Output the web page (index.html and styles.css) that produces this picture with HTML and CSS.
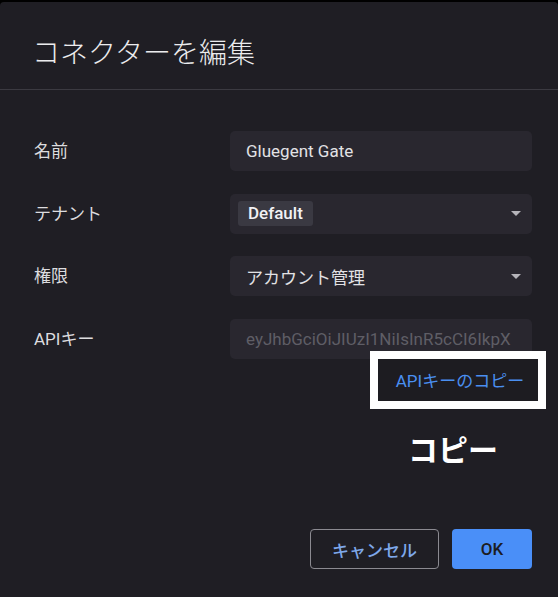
FILE: index.html
```html
<!DOCTYPE html>
<html lang="ja">
<head>
<meta charset="utf-8">
<title>コネクターを編集</title>
<link rel="stylesheet" href="styles.css">
</head>
<body>
<div class="dialog">
  <div class="dialog-header">
    <h1 class="dialog-title">コネクターを編集</h1>
  </div>
  <div class="dialog-body">
    <div class="form-grid">
      <div class="label">名前</div>
      <div class="field"><span class="field-text">Gluegent Gate</span></div>

      <div class="label">テナント</div>
      <div class="field field-select chip-field">
        <span class="chip">Default</span>
        <span class="caret"></span>
      </div>

      <div class="label">権限</div>
      <div class="field field-select">
        <span class="field-text">アカウント管理</span>
        <span class="caret"></span>
      </div>

      <div class="label">APIキー</div>
      <div class="field field-disabled"><span class="field-text truncate">eyJhbGciOiJIUzI1NiIsInR5cCI6IkpX</span></div>
    </div>

    <div class="copy-row">
      <div class="copy-frame"><a class="copy-link">APIキーのコピー</a></div>
    </div>

    <div class="note-row">
      <span class="note">コピー</span>
    </div>
  </div>
  <div class="dialog-footer">
    <button class="btn btn-outline">キャンセル</button>
    <button class="btn btn-primary">OK</button>
  </div>
</div>
</body>
</html>
```

FILE: styles.css
```css
* { box-sizing: border-box; }

html, body {
  margin: 0;
  padding: 0;
  height: 100%;
}

body {
  background: #000;
  font-family: Roboto, "Noto Sans CJK JP", sans-serif;
  font-size: 17px;
  color: #dcdcdf;
  overflow: hidden;
}

.dialog {
  margin-top: 2px;
  height: calc(100vh - 2px);
  background: #1f1e24;
  border-radius: 4px 4px 0 0;
  display: flex;
  flex-direction: column;
}

.dialog-header {
  padding: 28px 32px 17px;
  border-bottom: 1px solid #3b3a41;
}

.dialog-title {
  margin: 0;
  font-family: "Noto Sans CJK JP", sans-serif;
  font-size: 28px;
  font-weight: 300;
  line-height: 42px;
  color: #ececee;
}

.dialog-body {
  padding: 41px 26px 0 34px;
}

.form-grid {
  display: grid;
  grid-template-columns: 196px 1fr;
  row-gap: 22.5px;
  align-items: center;
}

.label {
  font-size: 17px;
  color: #dcdcdf;
  line-height: 40px;
}

.field {
  height: 40px;
  background: #29272f;
  border-radius: 5px;
  display: flex;
  align-items: center;
  padding: 0 11px 0 16px;
  min-width: 0;
}

.field-text {
  color: #e2e2e5;
  font-size: 17px;
  white-space: nowrap;
}

.field-select .field-text {
  flex: 1 1 auto;
}

.chip-field {
  padding-left: 8px;
}

.chip {
  flex: 0 0 auto;
  height: 25px;
  line-height: 25px;
  padding: 0 10px;
  background: #3a3942;
  border-radius: 3px;
  color: #f2f2f4;
  font-weight: 500;
  margin-right: auto;
}

.caret {
  width: 0;
  height: 0;
  border-left: 5px solid transparent;
  border-right: 5px solid transparent;
  border-top: 5px solid #b5b4ba;
  margin-left: auto;
}

.field-disabled {
  padding-right: 2px;
}

.field-disabled .field-text {
  color: #5f5e66;
}

.truncate {
  overflow: hidden;
  display: block;
  width: 100%;
}

.copy-row {
  display: flex;
  justify-content: flex-end;
  margin-top: -8px;
  margin-right: -14px;
}

.copy-frame {
  position: relative;
  width: 176px;
  height: 58px;
  border: 8px solid #ffffff;
  background: #1d1c21;
  display: flex;
  align-items: center;
  justify-content: center;
  padding-left: 4px;
}

.copy-link {
  color: #4a8ff0;
  font-size: 17px;
  white-space: nowrap;
  cursor: pointer;
}

.note-row {
  display: flex;
  justify-content: flex-end;
  margin-top: 24px;
  padding-right: 34px;
}

.note {
  font-family: "Noto Sans CJK JP", sans-serif;
  font-weight: 700;
  font-size: 30px;
  line-height: 30px;
  color: #ffffff;
}

.dialog-footer {
  margin-top: auto;
  display: flex;
  justify-content: flex-end;
  gap: 13px;
  padding: 0 26px 28px;
}

.btn {
  height: 40px;
  border-radius: 4px;
  font-family: Roboto, "Noto Sans CJK JP", sans-serif;
  font-size: 17px;
  font-weight: 500;
  cursor: pointer;
}

.btn-outline {
  width: 129px;
  background: transparent;
  border: 1px solid #8b8a91;
  color: #7ea8ea;
}

.btn-primary {
  width: 80px;
  background: #4a8ff8;
  border: none;
  color: #1c1c22;
}
```
